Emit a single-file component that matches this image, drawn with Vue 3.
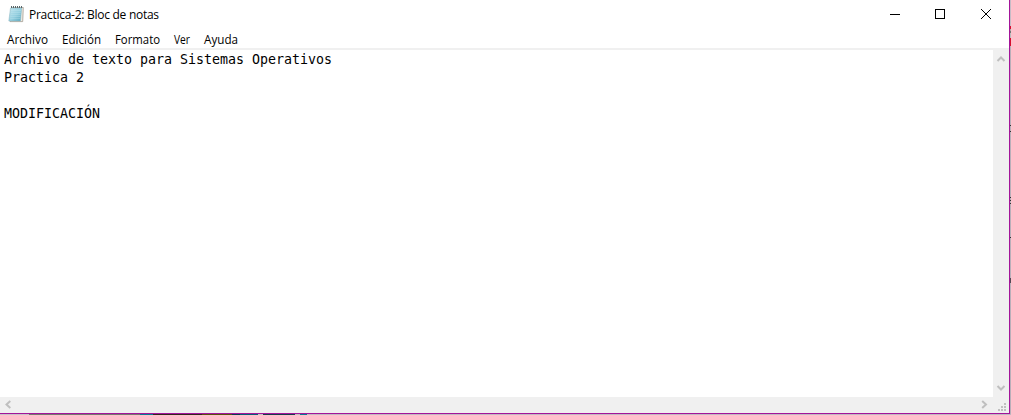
<script setup>
const menus = [
  { label: 'Archivo', width: 41 },
  { label: 'Edición', width: 39 },
  { label: 'Formato', width: 45 },
  { label: 'Ver', width: 16 },
  { label: 'Ayuda', width: 34 },
]
const lines = ['Archivo de texto para Sistemas Operativos', 'Practica 2', '', 'MODIFICACIÓN']
</script>

<template>
  <div class="desktop">
    <div class="window">
      <header class="titlebar">
        <svg class="app-icon" width="16" height="17" viewBox="0 0 16 17">
          <defs>
            <linearGradient id="page" x1="0" y1="0" x2="1" y2="1">
              <stop offset="0" stop-color="#c3e6f0" />
              <stop offset="0.55" stop-color="#94cfdf" />
              <stop offset="1" stop-color="#58a8c0" />
            </linearGradient>
          </defs>
          <path d="M3.5 1.5H15.3L14.7 15.6H2L3.5 1.5Z" fill="#f1ede5" stroke="#978f84" stroke-width=".7" />
          <path d="M2.5 2H13.7L12.5 15H.8Z" fill="url(#page)" stroke="#8ab4c1" stroke-width=".5" />
          <path d="M3 4.5H13M2.8 6.5H12.8M2.6 8.5H12.6M2.4 10.5H12.4M2.2 12.5H12.2" stroke="#c8e9f1" stroke-width=".3" />
          <path d="M3 1H14.5" stroke="#55666b" stroke-width="2" stroke-dasharray="1 1" />
        </svg>
        <span class="title">Practica-2: Bloc de notas</span>
        <div class="controls">
          <svg width="46" height="29" viewBox="0 0 46 29"><path d="M19 14.5H29" stroke="#000" /></svg>
          <svg width="46" height="29" viewBox="0 0 46 29"><rect x="18.5" y="9.5" width="9" height="9" fill="none" stroke="#000" /></svg>
          <svg width="46" height="29" viewBox="0 0 46 29"><path d="M18 9L28 19M28 9L18 19" stroke="#000" /></svg>
        </div>
      </header>
      <nav class="menubar">
        <svg v-for="m in menus" :key="m.label" :width="m.width + 2" height="18">
          <text x="0" y="14" :textLength="m.width" lengthAdjust="spacingAndGlyphs">{{ m.label }}</text>
        </svg>
      </nav>
      <main class="editor">
        <div class="document">
          <div v-for="(line, i) in lines" :key="i" class="line">{{ line }}</div>
        </div>
        <div class="vscroll">
          <svg width="16" height="17" viewBox="0 0 16 17"><path d="M4.5 11L8 7.5L11.5 11" /></svg>
          <svg width="16" height="17" viewBox="0 0 16 17"><path d="M4.5 6L8 9.5L11.5 6" /></svg>
        </div>
      </main>
      <footer class="hscroll">
        <svg width="17" height="16" viewBox="0 0 17 16"><path d="M10.3 4L6.5 7.5L10.3 11" /></svg>
        <svg class="right-arrow" width="17" height="16" viewBox="0 0 17 16"><path d="M6.2 4L10 7.5L6.2 11" /></svg>
        <svg class="grip" width="16" height="16" viewBox="0 0 16 16">
          <path d="M11 6h2v2h-2zM8 9h2v2H8zM11 9h2v2h-2zM5 12h2v2H5zM8 12h2v2H8zM11 12h2v2h-2z" />
        </svg>
      </footer>
    </div>
    <div class="behind-right"></div>
    <div class="behind-bottom"></div>
  </div>
</template>

<style>
body { margin: 0; overflow: hidden; }
</style>

<style scoped>
.desktop {
  display: grid;
  grid-template: 414px 1px / 1010px 1px;
  width: 1011px;
  height: 415px;
}
.window {
  box-sizing: border-box;
  display: flex;
  flex-direction: column;
  border-right: 1px solid #a3149a;
  border-bottom: 1px solid #a3149a;
  background: #fff;
  color: #000;
}
.titlebar {
  display: flex;
  height: 30px;
  flex: none;
  padding-left: 8px;
}
.app-icon { margin-top: 6px; }
.title {
  margin-left: 5px;
  font: 12px/30px "Open Sans", "Noto Sans", sans-serif;
  letter-spacing: -0.27px;
  white-space: pre;
}
.controls { display: flex; margin-left: auto; }
.menubar {
  display: flex;
  flex: none;
  box-sizing: border-box;
  height: 20px;
  gap: 12px;
  padding-left: 7px;
  border-bottom: 2px solid #f0f0f0;
}
.menubar svg { overflow: visible; }
.menubar text { font: 12px "Open Sans", "Noto Sans", sans-serif; }
.editor { display: flex; flex: 1; min-height: 0; }
.document {
  flex: 1;
  padding: 1px 0 0 4px;
  font: 13.3px/18px "DejaVu Sans Mono", monospace;
  letter-spacing: -0.007px;
}
.line { height: 18px; white-space: pre; }
.vscroll {
  display: flex;
  flex-direction: column;
  justify-content: space-between;
  width: 16px;
  background: #f0f0f0;
}
.hscroll {
  display: flex;
  flex: none;
  height: 16px;
  background: #f0f0f0;
}
.vscroll path, .hscroll path { fill: none; stroke: #bfbfbf; stroke-width: 2; }
.right-arrow { margin-left: auto; }
.hscroll .grip path { fill: #bfbfbf; stroke: none; }
.behind-right {
  background: linear-gradient(#c6bcc6 26px, #d5102f 26px 29px, #aaa 29px 31px, #777 31px 33px, #bbb 33px 38px, #d5102f 38px 46px, #b9afb9 46px 125px, #333 125px 126px, #b9afb9 126px 131px, #333 131px 132px, #b9afb9 132px 197px, #333 197px 198px, #b9afb9 198px 200px, #333 200px 201px, #b9afb9 201px 203px, #333 203px 204px, #b9afb9 204px 237px, #333 237px 238px, #b9afb9 238px 278px, #554a55 278px 283px, #b9afb9 283px);
}
.behind-bottom {
  grid-column: 1 / -1;
  background: linear-gradient(90deg, #c8c2c8 29px, #77786f 29px 140px, #087b91 140px 153px, #34251d 153px 202px, #56510f 202px 232px, #0a3c50 232px 240px, #075e75 240px 258px, #c4c4c4 258px 263px, #173c4b 263px 295px, #bdbdbd 295px 300px, #087b91 300px 307px, #c1b9c1 307px);
}
</style>
